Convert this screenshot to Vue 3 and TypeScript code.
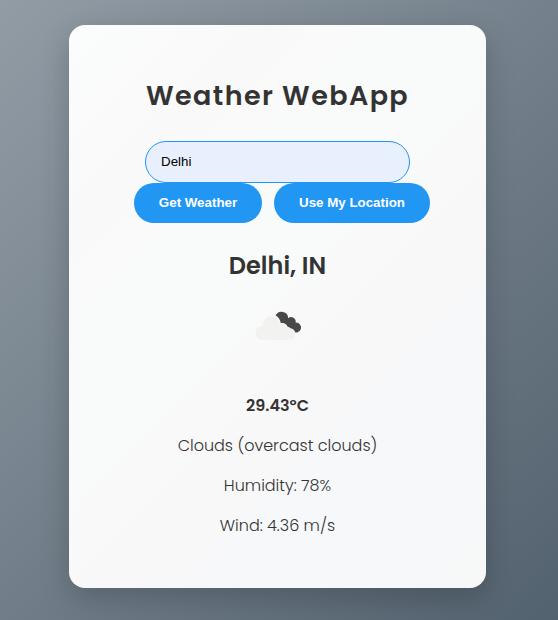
<script setup lang="ts">
import { ref } from 'vue'

const city = ref('Delhi')
const details = [
  { text: 'Clouds (overcast clouds)', cls: 'clouds' },
  { text: 'Humidity: 78%', cls: 'humidity' },
  { text: 'Wind: 4.36 m/s', cls: 'wind' },
]
</script>

<template>
  <main class="page">
    <section class="card">
      <h1>Weather WebApp</h1>
      <input v-model="city" class="city" type="text" aria-label="City" />
      <div class="actions">
        <button class="get" type="button">Get Weather</button>
        <button class="locate" type="button">Use My Location</button>
      </div>
      <h2>Delhi, IN</h2>
      <svg class="icon" viewBox="0 0 100 100" aria-hidden="true">
        <g fill="#48484a">
          <path d="M47.6 38.6A6.6 6.6 0 0 1 60.2 41.2A4.6 4.6 0 0 1 67.6 45.6A5 5 0 1 1 64.6 54.2L62.3 52.4 60 51.7C59.6 48.4 57.2 45.9 54 45.9L52.8 46.1C52 42.6 50.6 40.1 47.6 38.6Z" />
        </g>
        <g fill="#f2f2f0">
          <circle cx="34.5" cy="56" r="7" />
          <circle cx="43.3" cy="47.2" r="8.2" />
          <circle cx="53.8" cy="52.2" r="6.3" />
          <circle cx="61.5" cy="57" r="6" />
          <rect x="34.5" y="50" width="27" height="13" />
        </g>
      </svg>
      <p class="temp">29.43°C</p>
      <p v-for="d in details" :key="d.cls" :class="d.cls">{{ d.text }}</p>
    </section>
  </main>
</template>

<style>
body {
  margin: 0;
}
</style>

<style scoped>
.page {
  box-sizing: border-box;
  height: 620px;
  padding: 25px 72px 32px 69px;
  background: linear-gradient(135deg, #929ca5 0%, #53626f 100%);
  font-family: Poppins, Inter, sans-serif;
  color: #333;
}
.card {
  box-sizing: border-box;
  display: flex;
  flex-direction: column;
  align-items: center;
  height: 563px;
  padding-top: 50px;
  border-radius: 16px;
  background: linear-gradient(135deg, #fbfdfc 0%, #f9f9f9 20%, #f9fbfa 40%, #f8f8f8 60%, #f7f8fa 76%, #f7f8f8 100%);
  box-shadow: 0 10px 30px rgba(0, 0, 0, 0.2);
}
h1 {
  margin: 0 0 24px;
  font-size: 27px;
  line-height: 42px;
  font-weight: 600;
  letter-spacing: 1.4px;
  white-space: nowrap;
}
.city {
  box-sizing: border-box;
  width: 265px;
  height: 42px;
  padding: 0 15px 2px;
  border: 1px solid #2196f3;
  border-radius: 25px;
  outline: none;
  background: #e8f0fe;
  color: #000;
  font: 13.333px/16px 'Liberation Sans', Arial, sans-serif;
}
.actions {
  display: flex;
  gap: 12px;
  margin-left: 9px;
}
.actions button {
  height: 40px;
  padding: 0 0 1px;
  border: 0;
  border-radius: 25px;
  background: #2196f3;
  color: #fff;
  font: bold 13.333px/16px 'Liberation Sans', Arial, sans-serif;
}
.get {
  width: 128px;
}
.locate {
  width: 156px;
}
h2 {
  margin: 25px 0 8px;
  font-size: 24px;
  line-height: 36px;
  font-weight: 600;
}
.icon {
  width: 100px;
  height: 100px;
  margin: -15px 0 17px;
}
p {
  margin: 0 0 16px;
  font-size: 16px;
  line-height: 24px;
  font-weight: 300;
  white-space: nowrap;
}
.temp {
  font-weight: 600;
}
</style>
